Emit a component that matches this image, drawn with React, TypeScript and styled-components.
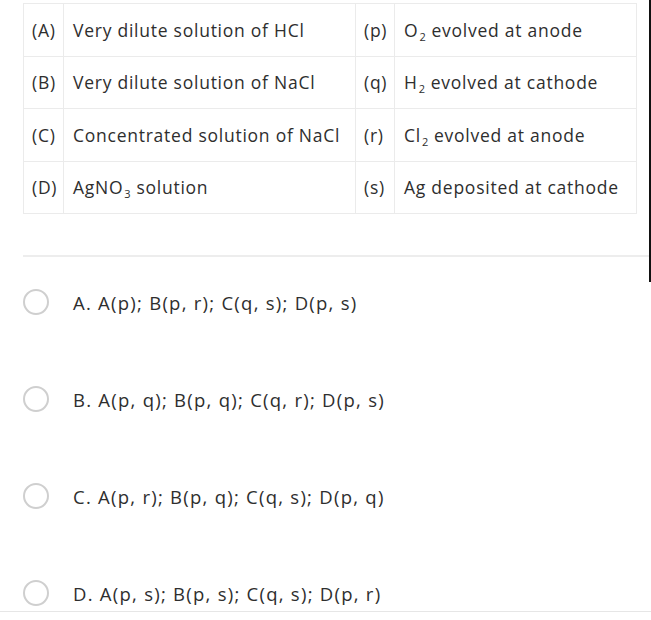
import React from "react";
import styled, { createGlobalStyle } from "styled-components";

const GlobalStyle = createGlobalStyle`
  html, body { margin: 0; padding: 0; background: #fff; }
  body { font-family: "Open Sans", "Noto Sans", sans-serif; color: #2e2e2e; }
`;

const Page = styled.div`
  width: 651px;
  height: 620px;
  overflow: hidden;
`;

const TopSection = styled.section`
  box-sizing: border-box;
  height: 282px;
  padding-top: 3px;
  border-right: 2px solid #111;
`;

const MatchTable = styled.table`
  margin-left: 23px;
  border-collapse: collapse;
  table-layout: fixed;
  width: 613px;
`;

const Row = styled.tr`
  height: 52.5px;
`;

const Cell = styled.td<{ $w: number; $label?: boolean }>`
  width: ${(p) => p.$w}px;
  border: 1px solid #ebebeb;
  padding: 0 0 0 ${(p) => (p.$label ? 8 : 9)}px;
  font-size: 17.5px;
  letter-spacing: 0.75px;
  white-space: nowrap;
  vertical-align: middle;
  color: #2e2e2e;
  box-sizing: border-box;
`;

const Sub = styled.sub`
  font-size: 11px;
  vertical-align: -4px;
  line-height: 0;
  margin: 0 5px 0 1px;
`;

const Separator = styled.hr`
  margin: 41px 0 0 23px;
  border: none;
  height: 2px;
  background: #ededed;
`;

const OptionList = styled.ul`
  list-style: none;
  margin: 0;
  padding: 7px 0 5px 23px;
  display: flex;
  flex-direction: column;
  gap: 71px;
  border-bottom: 1px solid #e6e6e6;
`;

const Option = styled.li`
  display: flex;
  align-items: center;
  gap: 24px;
  height: 26px;
  font-size: 18.5px;
  letter-spacing: 1.25px;
  color: #2e2e2e;
`;

const Radio = styled.span`
  box-sizing: border-box;
  width: 26px;
  height: 26px;
  border-radius: 50%;
  border: 2px solid #cfcfcf;
  flex: none;
`;

const rows: [string, React.ReactNode, string, React.ReactNode][] = [
  ["(A)", "Very dilute solution of HCl", "(p)", <>O<Sub>2</Sub>evolved at anode</>],
  ["(B)", "Very dilute solution of NaCl", "(q)", <>H<Sub>2</Sub>evolved at cathode</>],
  ["(C)", "Concentrated solution of NaCl", "(r)", <>Cl<Sub>2</Sub>evolved at anode</>],
  ["(D)", <>AgNO<Sub>3</Sub>solution</>, "(s)", "Ag deposited at cathode"],
];

const options = [
  "A. A(p); B(p, r); C(q, s); D(p, s)",
  "B. A(p, q); B(p, q); C(q, r); D(p, s)",
  "C. A(p, r); B(p, q); C(q, s); D(p, q)",
  "D. A(p, s); B(p, s); C(q, s); D(p, r)",
];

export default function App() {
  return (
    <Page>
      <GlobalStyle />
      <TopSection>
        <MatchTable>
          <tbody>
            {rows.map((r, i) => (
              <Row key={i}>
                <Cell $w={40} $label>{r[0]}</Cell>
                <Cell $w={292}>{r[1]}</Cell>
                <Cell $w={39} $label>{r[2]}</Cell>
                <Cell $w={242}>{r[3]}</Cell>
              </Row>
            ))}
          </tbody>
        </MatchTable>
        <Separator />
      </TopSection>
      <OptionList>
        {options.map((o) => (
          <Option key={o}>
            <Radio />
            <span>{o}</span>
          </Option>
        ))}
      </OptionList>
    </Page>
  );
}
